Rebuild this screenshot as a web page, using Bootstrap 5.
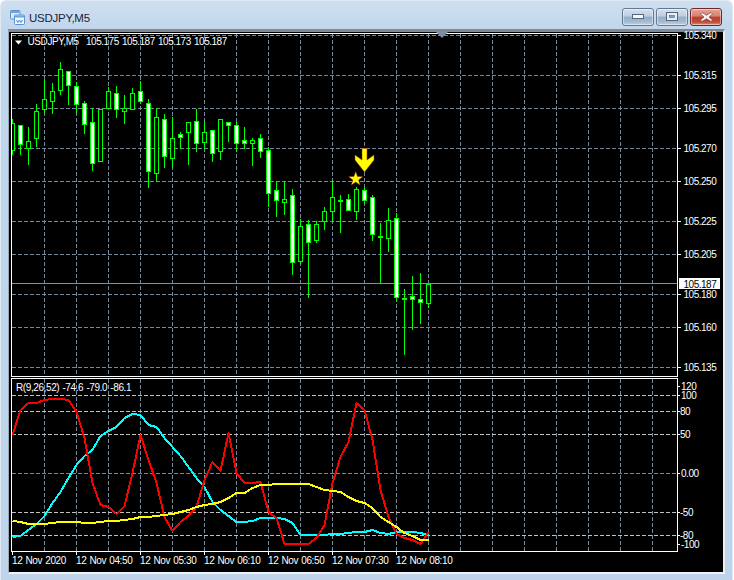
<!DOCTYPE html>
<html lang="en">
<head>
<meta charset="utf-8">
<title>USDJPY,M5</title>
<link href="https://cdn.jsdelivr.net/npm/bootstrap@5.3.0/dist/css/bootstrap.min.css" rel="stylesheet">
<style>
html,body{margin:0;background:#fff;overflow:hidden}
.term-win{width:733px;height:580px;border-radius:6px 6px 0 0;background:linear-gradient(180deg,#cfdff0 0,#c0d6ec 30px,#bdd4eb 100%);border:1px solid #dfe9f4;border-bottom:0}
.term-head{height:28px;padding:0 10px 0 9px}
.term-icon{width:15px;height:15px;margin-top:5px}
.term-title{font:11.5px "Liberation Sans",Arial,sans-serif;color:#1c1c3c;margin-left:4px;margin-top:5px;letter-spacing:-.25px}
.term-btns{gap:2px;margin-top:3px}
.term-ctl{width:32px;height:18px;padding:0;border:1px solid #66788c;border-radius:3px;background:linear-gradient(180deg,#d5e1ee 0,#bccee1 45%,#93adc9 50%,#a3bbd5 80%,#c0d1e3 100%);box-shadow:inset 0 0 0 1px rgba(255,255,255,.45);display:flex;align-items:center;justify-content:center}
.term-ctl.term-x{border-color:#6e2a2a;background:linear-gradient(180deg,#e6a597 0,#d97f6e 45%,#bd3f2c 50%,#c24a35 80%,#d98b78 100%)}
.term-body{margin:0 7px 6px 7px;border-top:3px solid #7f8a95;border-left:1px solid #9aa7b4;border-right:2px solid #e9eff6;border-bottom:2px solid #eef3f8;background:#000;height:545px;position:relative}
.term-body svg{display:block;overflow:visible}
.term-body text{font-family:"Liberation Sans",Arial,sans-serif;font-size:10px;letter-spacing:-.48px;fill:#fff}
.term-body text.term-wide{letter-spacing:-.4px;word-spacing:.8px}
</style>
</head>
<body>
<div class="term-win d-flex flex-column">
  <div class="term-head d-flex align-items-center">
    <svg class="term-icon" viewBox="0 0 15 15">
      <rect x="0.5" y="0.5" width="9.5" height="8.5" rx="1" fill="#dbe9f8" stroke="#5c93cf"/>
      <rect x="1" y="1" width="8.5" height="2" fill="#6ea5de"/>
      <rect x="4.5" y="5" width="10" height="9.5" rx="1" fill="#eef5fc" stroke="#5c93cf"/>
      <rect x="5" y="5.5" width="9" height="2" fill="#6ea5de"/>
      <path d="M6.5 10l1.5 2.5 1.5-2.5 1.5 2.5 1.5-2.5" fill="none" stroke="#4a86c8"/>
    </svg>
    <span class="term-title">USDJPY,M5</span>
    <div class="term-btns d-flex ms-auto">
      <button class="term-ctl" type="button" aria-label="Minimize"><svg width="12" height="5"><rect x=".5" y=".5" width="11" height="4" fill="#f4f7fb" stroke="#55677c"/></svg></button>
      <button class="term-ctl" type="button" aria-label="Maximize"><svg width="12" height="9"><rect x=".5" y=".5" width="11" height="8" fill="#e8eef5" stroke="#55677c"/><rect x="3.5" y="3.5" width="5" height="2" fill="#8ba2bb" stroke="#55677c" stroke-width=".6"/></svg></button>
      <button class="term-ctl term-x" type="button" aria-label="Close"><svg width="13" height="10" viewBox="0 0 13 10"><path d="M2 .5L6.5 3.2 11 .5l1.5 1.6L9 5l3.5 2.9L11 9.5 6.5 6.8 2 9.5.5 7.9 4 5 .5 2.1z" fill="#f2f2f4" stroke="#7a3030" stroke-width=".6"/></svg></button>
    </div>
  </div>
  <div class="term-body"><svg id="chart" width="715" height="540" viewBox="9 32 715 540" xmlns="http://www.w3.org/2000/svg"></svg></div>
</div>
<script src="https://cdn.jsdelivr.net/npm/bootstrap@5.3.0/dist/js/bootstrap.bundle.min.js"></script>
<script>
(function(){
var o=[];
function rect(x,y,w,h,f){o.push('<rect x="'+x+'" y="'+y+'" width="'+w+'" height="'+h+'" fill="'+f+'" shape-rendering="crispEdges"/>');}
function dash(x1,y1,x2,y2,c){o.push('<line x1="'+x1+'" y1="'+y1+'" x2="'+x2+'" y2="'+y2+'" stroke="'+c+'" stroke-dasharray="4 2" shape-rendering="crispEdges"/>');}
function txt(x,y,s,cl){o.push('<text x="'+x+'" y="'+y+'"'+(cl?' class="'+cl+'"':'')+'>'+s+'</text>');}
var slate='#778899',silver='#c0c0c0';
o.push('<defs><clipPath id="pane"><rect x="12" y="34" width="665" height="342"/></clipPath></defs>');
[35,75,108,148,181,221,254,294,327,367].forEach(function(y){dash(12,y+.5,677,y+.5,slate);});
var xs=[];for(var gx=44;gx<=652;gx+=32)xs.push(gx);
xs.forEach(function(x){dash(x+.5,34,x+.5,376,slate);dash(x+.5,379,x+.5,551,slate);});
[[395,silver],[411,silver],[434,silver],[473,slate],[512,silver],[535,silver]].forEach(function(l){dash(12,l[0]+.5,677,l[0]+.5,l[1]);});
rect(12,283,665,1,'#8c8c8c');
var c=[[12,119,123,150,154,'h'],[20,125,125,144,154,'w'],[28,127,141,148,164,'h'],[36,104,111,138,146,'h'],[44,80,99,109,113,'h'],[52,83,91,101,113,'h'],[60,62,69,90,94,'h'],[68,71,71,85,104,'w'],[76,82,86,104,113,'w'],[84,101,103,124,133,'w'],[92,108,122,163,170,'w'],[100,109,109,161,161,'h'],[108,87,91,108,108,'h'],[116,86,93,109,117,'w'],[124,95,108,111,123,'h'],[132,88,93,109,109,'h'],[140,81,91,101,103,'w'],[148,99,103,171,187,'w'],[156,108,117,173,181,'h'],[164,114,119,156,167,'w'],[172,117,138,158,167,'h'],[180,132,134,137,148,'w'],[188,122,122,132,164,'h'],[196,109,121,143,151,'w'],[204,121,132,142,148,'h'],[212,130,130,153,161,'w'],[220,119,119,151,159,'h'],[228,122,122,125,141,'w'],[236,122,125,143,151,'w'],[244,127,140,143,148,'w'],[252,138,140,143,165,'h'],[260,134,138,151,157,'w'],[268,147,150,193,206,'w'],[276,181,190,200,216,'w'],[284,181,199,202,214,'h'],[292,189,195,262,274,'w'],[300,219,226,261,263,'h'],[308,220,224,242,297,'w'],[316,221,224,240,242,'h'],[324,207,211,221,229,'h'],[332,181,197,211,221,'h'],[340,195,200,201,232,'d'],[348,194,199,210,210,'w'],[356,187,189,211,219,'h'],[364,187,190,200,203,'w'],[372,195,197,234,240,'w'],[380,223,236,237,283,'d'],[388,208,220,238,251,'h'],[396,213,218,297,300,'w'],[404,289,298,299,354,'d'],[412,276,296,299,329,'w'],[420,273,299,302,323,'w'],[428,284,284,303,307,'h']];
o.push('<g clip-path="url(#pane)">');
var g='#00ff00';
c.forEach(function(k){var x=k[0];
 rect(x,k[1],1,k[4]-k[1]+1,g);
 var h=k[3]-k[2]+1;
 rect(x-2,k[2],5,h,g);
 if(k[5]!='d'&&h>2){rect(x-1,k[2]+1,3,h-2,k[5]=='w'?'#fff':'#000');}
});
o.push('</g>');
o.push('<path d="M362 148.5H367V160L374 155V160L364.5 172 355 160V155L362 160Z" fill="#ffff00" stroke="#b03010" stroke-width=".5"/>');
var st='';for(var i=0;i<10;i++){var r=i%2?3:7.4,a=-Math.PI/2+i*Math.PI/5;st+=(i?'L':'M')+(355.7+r*Math.cos(a)).toFixed(2)+' '+(179+r*Math.sin(a)).toFixed(2);}
o.push('<path d="'+st+'Z" fill="#ffff00" stroke="#a03010" stroke-width=".4"/>');
var red=[435,410,403,403,400,399,399,400,412,438,483,505,507,514,506,473,435,460,483,517,531,522,516,507,480,462,471,433,473,483,483,482,512,518,544,544,544,544,538,525,483,457,442,403,410,440,490,517,534,538,540,544,532];
var cyan=[537,536,530,524,516,503,492,478,465,456,450,436,431,427,418,414,415,425,427,438,447,456,467,478,487,502,510,516,522,522,521,518,518,518,519,523,535,535,535,535,534,534,533,532,532,530,533,534,532,532,532,533,535];
var yel=[521,522,524,524,524,523,522,522,522,523,523,522,521,521,520,519,517,517,516,515,514,512,510,507,505,504,502,498,493,493,488,485,485,484,484,484,484,484,487,490,491,492,497,501,503,508,517,522,527,533,536,540,540];
function poly(a,col){var p=a.map(function(y,i){return (12+i*8+.5)+','+y;}).join(' ');o.push('<polyline points="'+p+'" fill="none" stroke="'+col+'" stroke-width="2" stroke-linejoin="round" shape-rendering="crispEdges"/>');}
poly(cyan,'#00ffff');poly(red,'#ff0000');poly(yel,'#ffff00');
rect(11,33,667,1,'#fff');rect(11,33,1,344,'#fff');rect(677,33,1,344,'#fff');rect(11,376,667,1,'#fff');
rect(11,378,667,1,'#fff');rect(11,378,1,174,'#fff');rect(677,378,1,174,'#fff');rect(11,551,667,1,'#fff');
o.push('<path d="M436 32H448L442 38Z" fill="#7f8fa3"/>');
o.push('<path d="M15 40.5H22L18.5 44.5Z" fill="#fff"/>');
txt(27.5,45,'USDJPY,M5','term-wide');txt(86,45,'105.175');txt(122,45,'105.187');txt(158,45,'105.173');txt(194,45,'105.187');
txt(16,391,'R(9,26,52) -74.6 -79.0 -86.1','term-wide');
[['105.340',35],['105.315',75],['105.295',108],['105.270',148],['105.250',181],['105.225',221],['105.205',254],['105.180',294],['105.160',327],['105.135',367]].forEach(function(l){rect(678,l[1],3,1,'#fff');txt(683.5,l[1]+4,l[0]);});
rect(679,278,41,11,'#fff');
o.push('<text x="683.5" y="287.5" style="fill:#000">105.187</text>');
[['120',386,681],['100',395,681],['80',411,680],['50',434,680],['0.00',473,681],['-50',512,680],['-80',535,680],['-100',544,681]].forEach(function(l){rect(678,l[1],2,1,'#fff');txt(l[2],l[1]+4,l[0]);});
[[12,'12 Nov 2020'],[76,'12 Nov 04:50'],[140,'12 Nov 05:30'],[204,'12 Nov 06:10'],[268,'12 Nov 06:50'],[332,'12 Nov 07:30'],[396,'12 Nov 08:10']].forEach(function(l){rect(l[0],552,1,3,'#fff');txt(l[0],564,l[1],'term-wide');});
document.getElementById('chart').innerHTML=o.join('');
})();
</script>
</body>
</html>
